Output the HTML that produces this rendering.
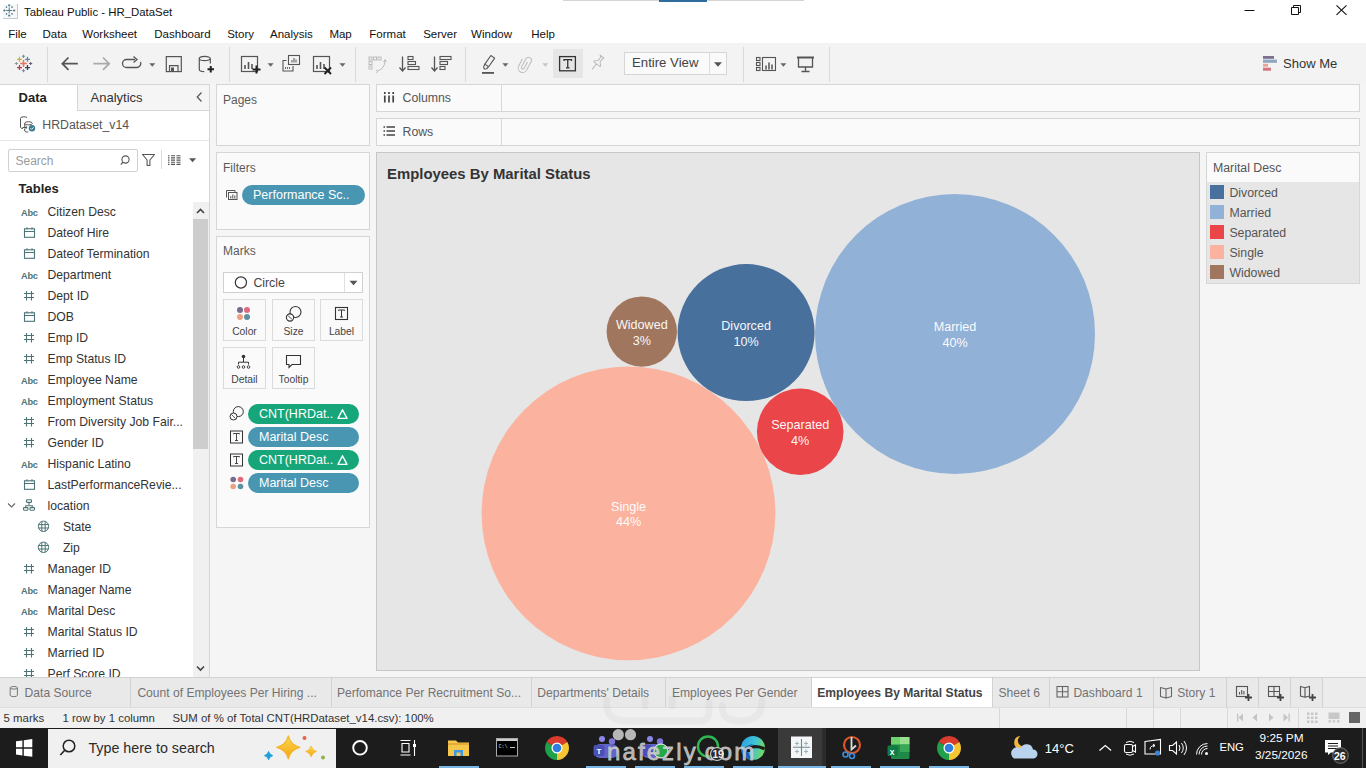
<!DOCTYPE html>
<html><head><meta charset="utf-8">
<style>
*{margin:0;padding:0;box-sizing:border-box}
html,body{width:1366px;height:768px;overflow:hidden;background:#f5f5f5;font-family:"Liberation Sans",sans-serif;color:#333}
.a{position:absolute}
.t{position:absolute;white-space:nowrap;line-height:1}
svg{position:absolute;overflow:visible}
</style></head><body>

<div class="a" style="left:0px;top:0px;width:1366px;height:44px;background:#fff;"></div>
<div class="a" style="left:563px;top:0px;width:96px;height:1px;background:#d4d4d4;"></div>
<div class="a" style="left:659px;top:0px;width:48px;height:2px;background:#2d6c9c;"></div>
<div class="a" style="left:707px;top:0px;width:97px;height:1px;background:#d4d4d4;"></div>
<svg style="left:3px;top:4px;" width="16" height="16" viewBox="0 0 16 16"><rect x="0" y="0" width="15" height="15" fill="#f6f8f9"/><path d="M14.5 0v14.5H0" fill="none" stroke="#c3c8cc" stroke-width="1"/><g stroke="#557a88" stroke-width="1"><path d="M6.2 3.5v6M3.2 6.5h6"/><path d="M6.2 0.3v2.2M5.1 1.4h2.2M6.2 10.5v2.2M5.1 11.6h2.2M0.3 6.5h2.2M1.4 5.4v2.2M10 6.5h2.2M11.1 5.4v2.2"/><path d="M2.8 3.1h1.4M3.5 2.4v1.4M8.3 3.1h1.4M9 2.4v1.4M2.8 9.9h1.4M3.5 9.2v1.4M8.3 9.9h1.4M9 9.2v1.4"/></g></svg>
<div class="t" style="left:24.0px;top:7.25px;font-size:11.4px;color:#111;font-weight:400;">Tableau Public - HR_DataSet</div>
<div class="t" style="left:8.2px;top:29.16px;font-size:11.5px;color:#111;font-weight:400;">File</div>
<div class="t" style="left:42.5px;top:29.16px;font-size:11.5px;color:#111;font-weight:400;">Data</div>
<div class="t" style="left:82.3px;top:29.16px;font-size:11.5px;color:#111;font-weight:400;">Worksheet</div>
<div class="t" style="left:154.3px;top:29.16px;font-size:11.5px;color:#111;font-weight:400;">Dashboard</div>
<div class="t" style="left:227.2px;top:29.16px;font-size:11.5px;color:#111;font-weight:400;">Story</div>
<div class="t" style="left:270.0px;top:29.16px;font-size:11.5px;color:#111;font-weight:400;">Analysis</div>
<div class="t" style="left:329.4px;top:29.16px;font-size:11.5px;color:#111;font-weight:400;">Map</div>
<div class="t" style="left:369.3px;top:29.16px;font-size:11.5px;color:#111;font-weight:400;">Format</div>
<div class="t" style="left:423.2px;top:29.16px;font-size:11.5px;color:#111;font-weight:400;">Server</div>
<div class="t" style="left:471.1px;top:29.16px;font-size:11.5px;color:#111;font-weight:400;">Window</div>
<div class="t" style="left:531.2px;top:29.16px;font-size:11.5px;color:#111;font-weight:400;">Help</div>
<svg style="left:1244px;top:5px;" width="12" height="12" viewBox="0 0 12 12"><path d="M0.5 5.5h10" stroke="#111" stroke-width="1"/></svg>
<svg style="left:1289px;top:4px;" width="12" height="12" viewBox="0 0 12 12"><path d="M2.5 3.5h7v7h-7z M4.5 3.5v-2h7v7h-2" fill="none" stroke="#111" stroke-width="1"/></svg>
<svg style="left:1335.5px;top:5px;" width="11" height="11" viewBox="0 0 11 11"><path d="M0.5 0.3l10 9.6M10.5 0.3l-10 9.6" stroke="#111" stroke-width="1.1"/></svg>
<div class="a" style="left:0px;top:43px;width:1366px;height:41px;background:#f3f3f3;"></div>
<div class="a" style="left:47px;top:47px;width:1px;height:35px;background:#dadada;"></div>
<div class="a" style="left:229px;top:47px;width:1px;height:35px;background:#dadada;"></div>
<div class="a" style="left:355px;top:47px;width:1px;height:35px;background:#dadada;"></div>
<div class="a" style="left:465px;top:47px;width:1px;height:35px;background:#dadada;"></div>
<div class="a" style="left:743px;top:47px;width:1px;height:35px;background:#dadada;"></div>
<div class="a" style="left:829px;top:47px;width:1px;height:35px;background:#dadada;"></div>
<svg style="left:0px;top:0px;" width="1" height="1" viewBox="0 0 1 1"><path d="M20.1 63.5h6.8M23.5 60.1v6.8" stroke="#e2775c" stroke-width="1.6"/><path d="M17.0 59.3h5.0M19.5 56.8v5.0" stroke="#cfae45" stroke-width="1.3"/><path d="M25.0 59.3h5.0M27.5 56.8v5.0" stroke="#5b8d9c" stroke-width="1.3"/><path d="M17.0 67.6h5.0M19.5 65.1v5.0" stroke="#b73a52" stroke-width="1.3"/><path d="M25.0 67.6h5.0M27.5 65.1v5.0" stroke="#2b4559" stroke-width="1.3"/><path d="M21.9 56.3h3.2M23.5 54.699999999999996v3.2" stroke="#5d9aa3" stroke-width="1.1"/><path d="M21.9 70.7h3.2M23.5 69.10000000000001v3.2" stroke="#7d89aa" stroke-width="1.1"/><path d="M14.799999999999999 63.5h3.2M16.4 61.9v3.2" stroke="#8b9b98" stroke-width="1.1"/><path d="M29.0 63.5h3.2M30.6 61.9v3.2" stroke="#6c5c7e" stroke-width="1.1"/></svg>
<svg style="left:0px;top:0px;" width="1" height="1" viewBox="0 0 1 1"><path d="M77.8 63.7H62.5M68.5 57.5l-6.2 6.2 6.2 6.2" fill="none" stroke="#555" stroke-width="1.7"/><path d="M93.4 63.7h15.5M103 57.5l6.2 6.2-6.2 6.2" fill="none" stroke="#aaa" stroke-width="1.7"/></svg>
<svg style="left:0px;top:0px;" width="1" height="1" viewBox="0 0 1 1"><path d="M135 59.5h-8.5a4 4 0 0 0 0 8h10.5a4 4 0 0 0 3.5-5.5" fill="none" stroke="#555" stroke-width="1.3"/><path d="M133.5 56.5l3.5 3-3.5 3" fill="none" stroke="#555" stroke-width="1.3"/><path d="M149.3 63.25h6l-3.0 3.5z" fill="#666"/></svg>
<svg style="left:0px;top:0px;" width="1" height="1" viewBox="0 0 1 1"><rect x="166.3" y="56.6" width="15" height="15" fill="none" stroke="#555" stroke-width="1.2"/><path d="M169.5 71.2v-5.5h8.5v5.5" fill="none" stroke="#555" stroke-width="1.2"/><rect x="171" y="67.5" width="3" height="4" fill="#555"/></svg>
<svg style="left:0px;top:0px;" width="1" height="1" viewBox="0 0 1 1"><path d="M199.3 58.5v11a5.5 2.2 0 0 0 5 2.2M199.3 58.5a5.5 2.2 0 0 1 11 0v5" fill="none" stroke="#555" stroke-width="1.2"/><path d="M199.3 58.5a5.5 2.2 0 0 0 11 0" fill="none" stroke="#555" stroke-width="1.2"/><path d="M207.5 69.3h6.5M210.75 66v6.6" stroke="#222" stroke-width="2"/></svg>
<svg style="left:0px;top:0px;" width="1" height="1" viewBox="0 0 1 1"><rect x="241.5" y="56.5" width="16" height="15" fill="none" stroke="#555" stroke-width="1.2"/><path d="M245 69v-4M248.5 69v-7M252 69v-5" stroke="#555" stroke-width="1.6"/><path d="M252.5 69.5h8M256.5 65.5v8" stroke="#222" stroke-width="2"/><path d="M267.6 63.25h6l-3.0 3.5z" fill="#666"/></svg>
<svg style="left:0px;top:0px;" width="1" height="1" viewBox="0 0 1 1"><rect x="288.5" y="55.5" width="11" height="9" fill="#f3f3f3" stroke="#555" stroke-width="1.1"/><path d="M292 62.5v-2.5M294 62.5v-4.5M296 62.5v-3" stroke="#555" stroke-width="1"/><path d="M286.5 60.5h-3.5v10.5h10v-5" fill="none" stroke="#555" stroke-width="1.1"/><path d="M285.5 69v-2M287.5 69v-2M289.5 69v-2" stroke="#555" stroke-width="0.9"/></svg>
<svg style="left:0px;top:0px;" width="1" height="1" viewBox="0 0 1 1"><rect x="313.5" y="56.5" width="16" height="15" fill="none" stroke="#555" stroke-width="1.2"/><path d="M317 69v-4M320.5 69v-7M324 69v-5" stroke="#555" stroke-width="1.6"/><path d="M324.5 67.5l6.5 6.5M331 67.5l-6.5 6.5" stroke="#222" stroke-width="2"/><path d="M339.5 63.25h6l-3.0 3.5z" fill="#666"/></svg>
<svg style="left:0px;top:0px;" width="1" height="1" viewBox="0 0 1 1"><g fill="none" stroke="#bbb" stroke-width="1"><rect x="369" y="57" width="3" height="3"/><rect x="373.5" y="57" width="3" height="3"/><rect x="378" y="57" width="3" height="3"/><rect x="369" y="61.5" width="3" height="3"/><rect x="369" y="66" width="3" height="3"/><path d="M385 60.5q0 8-7.5 10.5M383.5 62l1.5-2.5 1.5 2.5M376 70l1.5 1.2-1 1.8"/></g></svg>
<svg style="left:0px;top:0px;" width="1" height="1" viewBox="0 0 1 1"><path d="M402.5 56.5v14M399.5 67.5l3 3.5 3-3.5" fill="none" stroke="#555" stroke-width="1.3"/><g fill="none" stroke="#555" stroke-width="1.1"><rect x="408" y="56.5" width="5" height="3"/><rect x="408" y="61.5" width="7.5" height="3"/><rect x="408" y="66.5" width="11" height="3"/></g></svg>
<svg style="left:0px;top:0px;" width="1" height="1" viewBox="0 0 1 1"><path d="M434.5 56.5v14M431.5 67.5l3 3.5 3-3.5" fill="none" stroke="#555" stroke-width="1.3"/><g fill="none" stroke="#555" stroke-width="1.1"><rect x="440" y="56.5" width="11" height="3"/><rect x="440" y="61.5" width="7.5" height="3"/><rect x="440" y="66.5" width="5" height="3"/></g></svg>
<svg style="left:0px;top:0px;" width="1" height="1" viewBox="0 0 1 1"><g transform="translate(488.3 63.2) rotate(35)" fill="none" stroke="#555" stroke-width="1.1" stroke-linejoin="round"><path d="M-2.3 -7.8h4.6v10.5h-4.6z M-2.3 2.7l0.5 2.8l1.6 1.5h0.4l1.6-1.5l0.5-2.8"/></g><rect x="482" y="72" width="12" height="1.8" fill="#555"/><path d="M502.4 63.25h6l-3.0 3.5z" fill="#666"/></svg>
<svg style="left:0px;top:0px;" width="1" height="1" viewBox="0 0 1 1"><g transform="translate(525 63.6) rotate(28)" fill="none" stroke="#bbb" stroke-width="1"><path d="M1.5 -2.5V4.5a1.5 1.5 0 0 1-3 0V-4.5a3 3 0 0 1 6 0V5a4.5 4.5 0 0 1-9 0V-3"/></g><path d="M542.3 63.25h6l-3.0 3.5z" fill="#c4c4c4"/></svg>
<div class="a" style="left:553px;top:49px;width:30px;height:29px;background:#e6e6e6;"></div>
<svg style="left:0px;top:0px;" width="1" height="1" viewBox="0 0 1 1"><rect x="559.6" y="56.6" width="15.8" height="14.2" fill="none" stroke="#333" stroke-width="1.3"/><path d="M564 61v-1.3h7.5v1.3M567.75 59.7v8.2M566 67.9h3.5" fill="none" stroke="#333" stroke-width="1.3"/></svg>
<svg style="left:0px;top:0px;" width="1" height="1" viewBox="0 0 1 1"><g transform="translate(597.5 62.5) rotate(38)" fill="none" stroke="#bbb" stroke-width="1" stroke-linejoin="round"><path d="M-2.5 -7.5h5l-0.8 1.5v4l2.8 2.5v1.2h-8v-1.2l2.8-2.5v-4z M0 1.7v7"/></g></svg>
<div class="a" style="left:624px;top:52px;width:103px;height:23px;background:#fafafa;border:1px solid #d6d6d6;"></div>
<div class="a" style="left:709px;top:53px;width:1px;height:21px;background:#dcdcdc;"></div>
<div class="t" style="left:632.0px;top:56.42px;font-size:13.2px;color:#444;font-weight:400;">Entire View</div>
<svg style="left:0px;top:0px;" width="1" height="1" viewBox="0 0 1 1"><path d="M714.0 62.25h8l-4.0 4.5z" fill="#555"/></svg>
<svg style="left:0px;top:0px;" width="1" height="1" viewBox="0 0 1 1"><g fill="none" stroke="#555" stroke-width="1.1"><rect x="756.5" y="57.5" width="3.5" height="3"/><rect x="756.5" y="62.5" width="3.5" height="3"/><rect x="756.5" y="67.5" width="3.5" height="3"/><rect x="762.5" y="57.5" width="13" height="13"/></g><path d="M766 69.5v-4M769 69.5v-7M772 69.5v-5" stroke="#555" stroke-width="1.5"/><path d="M780.4 63.25h6l-3.0 3.5z" fill="#666"/></svg>
<svg style="left:0px;top:0px;" width="1" height="1" viewBox="0 0 1 1"><path d="M797 57.5h17" stroke="#555" stroke-width="2"/><path d="M798.5 58v9h14v-9M805.5 67v4.5M801.5 71.5h8" fill="none" stroke="#555" stroke-width="1.3"/></svg>
<svg style="left:0px;top:0px;" width="1" height="1" viewBox="0 0 1 1"><rect x="1263" y="56" width="11" height="2.8" fill="#7b7090"/><rect x="1263" y="59.6" width="14" height="3.2" fill="#8ea6bf"/><rect x="1263" y="63.8" width="5" height="2.9" fill="#eaa48f"/><rect x="1263" y="67.7" width="8" height="3" fill="#d7737d"/></svg>
<div class="t" style="left:1283.0px;top:56.99px;font-size:13px;color:#333;font-weight:400;">Show Me</div>
<div class="a" style="left:0px;top:84px;width:210px;height:593px;background:#fff;border:1px solid #d6d6d6;border-left:none;border-bottom:none"></div>
<div class="a" style="left:77px;top:84px;width:133px;height:27px;background:#f5f5f5;border:1px solid #d6d6d6;border-right:1px solid #d6d6d6"></div>
<div class="a" style="left:0px;top:110px;width:77px;height:1px;background:#fff;"></div>
<div class="t" style="left:18.6px;top:90.89px;font-size:13px;color:#222;font-weight:700;">Data</div>
<div class="t" style="left:90.6px;top:90.89px;font-size:13px;color:#333;font-weight:400;">Analytics</div>
<svg style="left:0px;top:0px;" width="1" height="1" viewBox="0 0 1 1"><path d="M201.5 92.5l-4.3 4.5 4.3 4.5" fill="none" stroke="#555" stroke-width="1.2"/></svg>
<svg style="left:0px;top:0px;" width="1" height="1" viewBox="0 0 1 1"><path d="M27 117.5a3.5 1.5 0 0 0-6.5 0.8v9a3 1.5 0 0 0 2.5 1.3" fill="none" stroke="#555" stroke-width="1"/><ellipse cx="28.5" cy="123.3" rx="3.8" ry="1.6" fill="none" stroke="#555" stroke-width="1"/><path d="M24.7 123.3v3.5M22.5 127.5h4.5M25.5 126l1.6 1.5-1.6 1.5M24.7 128.5v2.5a3 1.3 0 0 0 3.5 1" fill="none" stroke="#555" stroke-width="1"/><circle cx="32" cy="128.2" r="3.2" fill="#3d7a96"/><path d="M30.5 128.2l1.1 1.1 2-2" fill="none" stroke="#fff" stroke-width="0.9"/></svg>
<div class="t" style="left:42.3px;top:119.19px;font-size:12.3px;color:#555;font-weight:400;">HRDataset_v14</div>
<div class="a" style="left:0px;top:140px;width:209px;height:1px;background:#e6e6e6;"></div>
<div class="a" style="left:8px;top:149px;width:130px;height:23px;background:#fff;border:1px solid #d0d0d0;border-radius:2px"></div>
<div class="t" style="left:15.5px;top:154.84px;font-size:12px;color:#9c9c9c;font-weight:400;">Search</div>
<svg style="left:0px;top:0px;" width="1" height="1" viewBox="0 0 1 1"><circle cx="125.5" cy="159.5" r="3.6" fill="none" stroke="#555" stroke-width="1.1"/><path d="M123 162.2l-2.2 2.4" stroke="#555" stroke-width="1.2"/><path d="M142.5 154.5h12l-4.6 5.5v5.5h-2.8v-5.5z" fill="none" stroke="#555" stroke-width="1.1" stroke-linejoin="round"/><path d="M161.5 150v19" stroke="#dcdcdc" stroke-width="1"/><g stroke="#555" stroke-width="1.1"><path d="M168 155.7h1.5M171 155.7h4M176.5 155.7h4M168 157.9h1.5M171 157.9h4M176.5 157.9h4M168 160.1h1.5M171 160.1h4M176.5 160.1h4M168 162.3h1.5M171 162.3h4M176.5 162.3h4M168 164.4h1.5M171 164.4h4M176.5 164.4h4"/></g><path d="M189.1 158.2h7l-3.5 4z" fill="#555"/></svg>
<div class="t" style="left:18.6px;top:182.39px;font-size:13px;color:#222;font-weight:700;">Tables</div>
<div class="a" style="left:193px;top:202px;width:16px;height:475px;background:#f0f0f0;"></div>
<div class="a" style="left:193px;top:219px;width:15px;height:230px;background:#cdcdcd;"></div>
<svg style="left:0px;top:0px;" width="1" height="1" viewBox="0 0 1 1"><path d="M197 213l3.5-3.5 3.5 3.5" fill="none" stroke="#444" stroke-width="1.6"/><path d="M197 666.5l3.5 3.5 3.5-3.5" fill="none" stroke="#444" stroke-width="1.6"/></svg>
<div class="t" style="left:47.5px;top:205.77px;font-size:12.2px;color:#333;font-weight:400;">Citizen Desc</div>
<div class="t" style="left:47.5px;top:226.77px;font-size:12.2px;color:#333;font-weight:400;">Dateof Hire</div>
<div class="t" style="left:47.5px;top:247.77px;font-size:12.2px;color:#333;font-weight:400;">Dateof Termination</div>
<div class="t" style="left:47.5px;top:268.77px;font-size:12.2px;color:#333;font-weight:400;">Department</div>
<div class="t" style="left:47.5px;top:289.77px;font-size:12.2px;color:#333;font-weight:400;">Dept ID</div>
<div class="t" style="left:47.5px;top:310.77px;font-size:12.2px;color:#333;font-weight:400;">DOB</div>
<div class="t" style="left:47.5px;top:331.77px;font-size:12.2px;color:#333;font-weight:400;">Emp ID</div>
<div class="t" style="left:47.5px;top:352.77px;font-size:12.2px;color:#333;font-weight:400;">Emp Status ID</div>
<div class="t" style="left:47.5px;top:373.77px;font-size:12.2px;color:#333;font-weight:400;">Employee Name</div>
<div class="t" style="left:47.5px;top:394.77px;font-size:12.2px;color:#333;font-weight:400;">Employment Status</div>
<div class="t" style="left:47.5px;top:415.77px;font-size:12.2px;color:#333;font-weight:400;">From Diversity Job Fair...</div>
<div class="t" style="left:47.5px;top:436.77px;font-size:12.2px;color:#333;font-weight:400;">Gender ID</div>
<div class="t" style="left:47.5px;top:457.77px;font-size:12.2px;color:#333;font-weight:400;">Hispanic Latino</div>
<div class="t" style="left:47.5px;top:478.77px;font-size:12.2px;color:#333;font-weight:400;">LastPerformanceRevie...</div>
<div class="t" style="left:47.5px;top:499.77px;font-size:12.2px;color:#333;font-weight:400;">location</div>
<div class="t" style="left:62.9px;top:520.77px;font-size:12.2px;color:#333;font-weight:400;">State</div>
<div class="t" style="left:62.9px;top:541.77px;font-size:12.2px;color:#333;font-weight:400;">Zip</div>
<div class="t" style="left:47.5px;top:562.77px;font-size:12.2px;color:#333;font-weight:400;">Manager ID</div>
<div class="t" style="left:47.5px;top:583.77px;font-size:12.2px;color:#333;font-weight:400;">Manager Name</div>
<div class="t" style="left:47.5px;top:604.77px;font-size:12.2px;color:#333;font-weight:400;">Marital Desc</div>
<div class="t" style="left:47.5px;top:625.77px;font-size:12.2px;color:#333;font-weight:400;">Marital Status ID</div>
<div class="t" style="left:47.5px;top:646.77px;font-size:12.2px;color:#333;font-weight:400;">Married ID</div>
<div class="a" style="left:0;top:660px;width:192px;height:17px;overflow:hidden"><div class="t" style="left:47.5px;top:7.77px;font-size:12.2px;color:#333">Perf Score ID</div></div>
<div class="a" style="left:0;top:660px;width:192px;height:17px;overflow:hidden"><svg style="left:0;top:-660px" width="1" height="1"><path d="M26.5 669v9.5M31.5 669v9.5M24 671.5h10M24 675.5h10" stroke="#4d7476" stroke-width="1.1"/></svg></div>
<svg style="left:0px;top:0px;" width="1" height="1" viewBox="0 0 1 1"><text x="21" y="215.60000000000002" font-family="Liberation Sans" font-weight="700" font-size="9.2" fill="#4d7476" letter-spacing="-0.2">Abc</text><rect x="24.5" y="228.8" width="10" height="8.5" fill="none" stroke="#4d7476" stroke-width="1.1"/><path d="M24.5 231.5h10M27 227.3v2M32 227.3v2" stroke="#4d7476" stroke-width="1.1"/><rect x="24.5" y="249.8" width="10" height="8.5" fill="none" stroke="#4d7476" stroke-width="1.1"/><path d="M24.5 252.5h10M27 248.3v2M32 248.3v2" stroke="#4d7476" stroke-width="1.1"/><text x="21" y="278.6" font-family="Liberation Sans" font-weight="700" font-size="9.2" fill="#4d7476" letter-spacing="-0.2">Abc</text><path d="M26.5 291v9.5M31.5 291v9.5M24 293.5h10M24 297.5h10" stroke="#4d7476" stroke-width="1.1"/><rect x="24.5" y="312.8" width="10" height="8.5" fill="none" stroke="#4d7476" stroke-width="1.1"/><path d="M24.5 315.5h10M27 311.3v2M32 311.3v2" stroke="#4d7476" stroke-width="1.1"/><path d="M26.5 333v9.5M31.5 333v9.5M24 335.5h10M24 339.5h10" stroke="#4d7476" stroke-width="1.1"/><path d="M26.5 354v9.5M31.5 354v9.5M24 356.5h10M24 360.5h10" stroke="#4d7476" stroke-width="1.1"/><text x="21" y="383.6" font-family="Liberation Sans" font-weight="700" font-size="9.2" fill="#4d7476" letter-spacing="-0.2">Abc</text><text x="21" y="404.6" font-family="Liberation Sans" font-weight="700" font-size="9.2" fill="#4d7476" letter-spacing="-0.2">Abc</text><path d="M26.5 417v9.5M31.5 417v9.5M24 419.5h10M24 423.5h10" stroke="#4d7476" stroke-width="1.1"/><path d="M26.5 438v9.5M31.5 438v9.5M24 440.5h10M24 444.5h10" stroke="#4d7476" stroke-width="1.1"/><text x="21" y="467.6" font-family="Liberation Sans" font-weight="700" font-size="9.2" fill="#4d7476" letter-spacing="-0.2">Abc</text><rect x="24.5" y="480.8" width="10" height="8.5" fill="none" stroke="#4d7476" stroke-width="1.1"/><path d="M24.5 483.5h10M27 479.3v2M32 479.3v2" stroke="#4d7476" stroke-width="1.1"/><g fill="none" stroke="#4d7476" stroke-width="1.1"><rect x="26.5" y="499.8" width="5" height="2.6" rx="0.6"/><rect x="23.5" y="507.6" width="4.5" height="2.6" rx="0.6"/><rect x="30" y="507.6" width="4.5" height="2.6" rx="0.6"/><path d="M29 502.40000000000003v2.5M25.7 507.6v-1.9h6.6v1.9"/></g><path d="M8 503.5l3.5 3.5 3.5-3.5" fill="none" stroke="#666" stroke-width="1.1"/><g fill="none" stroke="#4d7476" stroke-width="1"><circle cx="43.5" cy="526.3" r="5.2"/><path d="M38.5 524.5999999999999h10M38.5 528.0h10M41.8 521.3v10M45.2 521.3v10"/></g><g fill="none" stroke="#4d7476" stroke-width="1"><circle cx="43.5" cy="547.3" r="5.2"/><path d="M38.5 545.5999999999999h10M38.5 549.0h10M41.8 542.3v10M45.2 542.3v10"/></g><path d="M26.5 564v9.5M31.5 564v9.5M24 566.5h10M24 570.5h10" stroke="#4d7476" stroke-width="1.1"/><text x="21" y="593.5999999999999" font-family="Liberation Sans" font-weight="700" font-size="9.2" fill="#4d7476" letter-spacing="-0.2">Abc</text><text x="21" y="614.5999999999999" font-family="Liberation Sans" font-weight="700" font-size="9.2" fill="#4d7476" letter-spacing="-0.2">Abc</text><path d="M26.5 627v9.5M31.5 627v9.5M24 629.5h10M24 633.5h10" stroke="#4d7476" stroke-width="1.1"/><path d="M26.5 648v9.5M31.5 648v9.5M24 650.5h10M24 654.5h10" stroke="#4d7476" stroke-width="1.1"/></svg>
<div class="a" style="left:216px;top:84px;width:154px;height:62px;background:#fafafa;border:1px solid #d6d6d6;"></div>
<div class="t" style="left:223.0px;top:94.34px;font-size:12px;color:#5a5a5a;font-weight:400;">Pages</div>
<div class="a" style="left:216px;top:152px;width:154px;height:78px;background:#fafafa;border:1px solid #d6d6d6;"></div>
<div class="t" style="left:223.0px;top:161.84px;font-size:12px;color:#5a5a5a;font-weight:400;">Filters</div>
<svg style="left:0px;top:0px;" width="1" height="1" viewBox="0 0 1 1"><g fill="none" stroke="#555" stroke-width="1"><path d="M226.5 197.5v-7h8.5v1.5"/><rect x="228.5" y="192.5" width="8.5" height="7"/></g><path d="M230.8 198.5v-2.5M232.8 198.5v-4M234.8 198.5v-3" stroke="#555" stroke-width="1"/></svg>
<div class="a" style="left:242px;top:185px;width:123px;height:20px;background:#4996b2;border-radius:10.0px"></div>
<div class="t" style="left:253.0px;top:188.82px;font-size:12.5px;color:#fff;font-weight:400;">Performance Sc..</div>
<div class="a" style="left:216px;top:236px;width:154px;height:292px;background:#fafafa;border:1px solid #d6d6d6;"></div>
<div class="t" style="left:223.0px;top:245.34px;font-size:12px;color:#5a5a5a;font-weight:400;">Marks</div>
<div class="a" style="left:223px;top:272px;width:140px;height:21px;background:#fff;border:1px solid #d0d0d0;"></div>
<div class="a" style="left:344px;top:273px;width:1px;height:19px;background:#e0e0e0;"></div>
<svg style="left:0px;top:0px;" width="1" height="1" viewBox="0 0 1 1"><circle cx="240.9" cy="282.5" r="5.6" fill="none" stroke="#333" stroke-width="1.2"/><path d="M349.5 280.75h8l-4.0 4.5z" fill="#555"/></svg>
<div class="t" style="left:253.4px;top:276.59px;font-size:12.3px;color:#444;font-weight:400;">Circle</div>
<div class="a" style="left:223px;top:299px;width:43px;height:42px;background:#fafafa;border:1px solid #dadada;"></div>
<svg style="left:0px;top:0px;" width="1" height="1" viewBox="0 0 1 1"><circle cx="240" cy="310" r="3" fill="#7a6a8e"/><circle cx="247" cy="310" r="3" fill="#e06a7c"/><circle cx="240" cy="317" r="3" fill="#eba17f"/><circle cx="247" cy="317" r="3" fill="#5d8fa0"/></svg>
<div class="t" style="left:223px;width:43px;text-align:center;top:327.28px;font-size:10.3px;color:#444">Color</div>
<div class="a" style="left:272px;top:299px;width:43px;height:42px;background:#fafafa;border:1px solid #dadada;"></div>
<svg style="left:0px;top:0px;" width="1" height="1" viewBox="0 0 1 1"><circle cx="295.5" cy="312" r="5.5" fill="none" stroke="#333" stroke-width="1.1"/><circle cx="290" cy="317.5" r="3.6" fill="#fafafa" stroke="#333" stroke-width="1.1"/><path d="M288 315.5l4 4" stroke="#333" stroke-width="0.9"/></svg>
<div class="t" style="left:272px;width:43px;text-align:center;top:327.28px;font-size:10.3px;color:#444">Size</div>
<div class="a" style="left:320px;top:299px;width:43px;height:42px;background:#fafafa;border:1px solid #dadada;"></div>
<svg style="left:0px;top:0px;" width="1" height="1" viewBox="0 0 1 1"><rect x="335.5" y="307.5" width="12" height="12" fill="none" stroke="#333" stroke-width="1.1"/><path d="M338.5 310.8v-0.8h6v0.8M341.5 310v7M340 317h3" fill="none" stroke="#333" stroke-width="1"/></svg>
<div class="t" style="left:320px;width:43px;text-align:center;top:327.28px;font-size:10.3px;color:#444">Label</div>
<div class="a" style="left:223px;top:347px;width:43px;height:42px;background:#fafafa;border:1px solid #dadada;"></div>
<svg style="left:0px;top:0px;" width="1" height="1" viewBox="0 0 1 1"><circle cx="243.5" cy="356.5" r="1.8" fill="#333"/><path d="M243.5 358v4M238.5 364.5v-2.3h10v2.3" fill="none" stroke="#333" stroke-width="1"/><circle cx="238.5" cy="367" r="1.3" fill="none" stroke="#333" stroke-width="0.9"/><circle cx="243.5" cy="367" r="1.3" fill="none" stroke="#333" stroke-width="0.9"/><circle cx="248.5" cy="367" r="1.3" fill="none" stroke="#333" stroke-width="0.9"/></svg>
<div class="t" style="left:223px;width:43px;text-align:center;top:375.28px;font-size:10.3px;color:#444">Detail</div>
<div class="a" style="left:272px;top:347px;width:43px;height:42px;background:#fafafa;border:1px solid #dadada;"></div>
<svg style="left:0px;top:0px;" width="1" height="1" viewBox="0 0 1 1"><path d="M286.5 355.5h14v9h-8.5l-3 3v-3h-2.5z" fill="none" stroke="#333" stroke-width="1.1"/></svg>
<div class="t" style="left:272px;width:43px;text-align:center;top:375.28px;font-size:10.3px;color:#444">Tooltip</div>
<svg style="left:0px;top:0px;" width="1" height="1" viewBox="0 0 1 1"><circle cx="238.3" cy="411.6" r="5" fill="none" stroke="#333" stroke-width="1"/><circle cx="233.5" cy="416.5" r="3.5" fill="#fafafa" stroke="#333" stroke-width="1"/><path d="M231.6 414.6l3.8 3.8" stroke="#333" stroke-width="0.8"/><rect x="230.5" y="431" width="12" height="12" fill="none" stroke="#333" stroke-width="1"/><path d="M233.5 434.3v-0.8h6v0.8M236.5 433.5v7M235 440.5h3" fill="none" stroke="#333" stroke-width="0.9"/><rect x="230.5" y="454" width="12" height="12" fill="none" stroke="#333" stroke-width="1"/><path d="M233.5 457.3v-0.8h6v0.8M236.5 456.5v7M235 463.5h3" fill="none" stroke="#333" stroke-width="0.9"/><circle cx="233.2" cy="479.5" r="2.8" fill="#7a6a8e"/><circle cx="240.5" cy="479.5" r="2.8" fill="#e06a7c"/><circle cx="233.2" cy="486.5" r="2.8" fill="#eba17f"/><circle cx="240.5" cy="486.5" r="2.8" fill="#5d8fa0"/></svg>
<div class="a" style="left:248px;top:404px;width:111px;height:20px;background:#16a679;border-radius:10.0px"></div>
<div class="t" style="left:259.0px;top:407.82px;font-size:12.5px;color:#fff;font-weight:400;">CNT(HRDat..</div>
<svg style="left:0px;top:0px;" width="1" height="1" viewBox="0 0 1 1"><path d="M338 418.4l4.5-8.7 4.5 8.7z" fill="none" stroke="#fff" stroke-width="1.4" stroke-linejoin="round"/></svg>
<div class="a" style="left:248px;top:427px;width:111px;height:20px;background:#4996b2;border-radius:10.0px"></div>
<div class="t" style="left:259.0px;top:430.82px;font-size:12.5px;color:#fff;font-weight:400;">Marital Desc</div>
<div class="a" style="left:248px;top:450px;width:111px;height:20px;background:#16a679;border-radius:10.0px"></div>
<div class="t" style="left:259.0px;top:453.82px;font-size:12.5px;color:#fff;font-weight:400;">CNT(HRDat..</div>
<svg style="left:0px;top:0px;" width="1" height="1" viewBox="0 0 1 1"><path d="M338 464.4l4.5-8.7 4.5 8.7z" fill="none" stroke="#fff" stroke-width="1.4" stroke-linejoin="round"/></svg>
<div class="a" style="left:248px;top:473px;width:111px;height:20px;background:#4996b2;border-radius:10.0px"></div>
<div class="t" style="left:259.0px;top:476.82px;font-size:12.5px;color:#fff;font-weight:400;">Marital Desc</div>
<div class="a" style="left:376px;top:84px;width:984px;height:28px;background:#fafafa;border:1px solid #d6d6d6;"></div>
<div class="a" style="left:501px;top:85px;width:1px;height:26px;background:#d9d9d9;"></div>
<svg style="left:0px;top:0px;" width="1" height="1" viewBox="0 0 1 1"><path d="M384.8 92v2M389 92v2M393.2 92v2M384.8 95.5v7M389 95.5v7M393.2 95.5v7" stroke="#444" stroke-width="1.7"/></svg>
<div class="t" style="left:402.5px;top:92.29px;font-size:12.3px;color:#555;font-weight:400;">Columns</div>
<div class="a" style="left:376px;top:118px;width:984px;height:28px;background:#fafafa;border:1px solid #d6d6d6;"></div>
<div class="a" style="left:501px;top:119px;width:1px;height:26px;background:#d9d9d9;"></div>
<svg style="left:0px;top:0px;" width="1" height="1" viewBox="0 0 1 1"><path d="M383.5 127h1.5M383.5 131h1.5M383.5 135h1.5M386.5 127h8.5M386.5 131h8.5M386.5 135h8.5" stroke="#444" stroke-width="1.6"/></svg>
<div class="t" style="left:402.5px;top:125.89px;font-size:12.3px;color:#555;font-weight:400;">Rows</div>
<div class="a" style="left:376px;top:152px;width:824px;height:519px;background:#e6e6e6;border:1px solid #c6c6c6;"></div>
<div class="t" style="left:387.0px;top:167.18px;font-size:14.9px;color:#333;font-weight:700;">Employees By Marital Status</div>
<svg style="left:0px;top:0px;" width="1" height="1" viewBox="0 0 1 1"><circle cx="628.5" cy="513.3" r="146.9" fill="#fbb39f"/><circle cx="955" cy="334" r="140" fill="#92b1d7"/><circle cx="746.1" cy="332.6" r="68.5" fill="#48709c"/><circle cx="800.2" cy="431.7" r="43.3" fill="#ea4548"/><circle cx="641.8" cy="331.6" r="35.2" fill="#a0765f"/></svg>
<div class="t" style="left:578.5px;width:100px;text-align:center;top:500.63px;font-size:12.6px;color:#fff;opacity:0.95">Single</div>
<div class="t" style="left:578.5px;width:100px;text-align:center;top:516.43px;font-size:12.6px;color:#fff;opacity:0.95">44%</div>
<div class="t" style="left:905px;width:100px;text-align:center;top:321.33px;font-size:12.6px;color:#fff;opacity:0.95">Married</div>
<div class="t" style="left:905px;width:100px;text-align:center;top:337.13px;font-size:12.6px;color:#fff;opacity:0.95">40%</div>
<div class="t" style="left:696.1px;width:100px;text-align:center;top:319.93px;font-size:12.6px;color:#fff;opacity:0.95">Divorced</div>
<div class="t" style="left:696.1px;width:100px;text-align:center;top:335.73px;font-size:12.6px;color:#fff;opacity:0.95">10%</div>
<div class="t" style="left:750.2px;width:100px;text-align:center;top:419.03px;font-size:12.6px;color:#fff;opacity:0.95">Separated</div>
<div class="t" style="left:750.2px;width:100px;text-align:center;top:434.83px;font-size:12.6px;color:#fff;opacity:0.95">4%</div>
<div class="t" style="left:591.8px;width:100px;text-align:center;top:318.93px;font-size:12.6px;color:#fff;opacity:0.95">Widowed</div>
<div class="t" style="left:591.8px;width:100px;text-align:center;top:334.73px;font-size:12.6px;color:#fff;opacity:0.95">3%</div>
<div class="a" style="left:1206px;top:152px;width:154px;height:132px;background:#e6e6e6;border:1px solid #d6d6d6;"></div>
<div class="a" style="left:1207px;top:153px;width:152px;height:29px;background:#fafafa;"></div>
<div class="t" style="left:1213.0px;top:162.09px;font-size:12.3px;color:#555;font-weight:400;">Marital Desc</div>
<div class="a" style="left:1210px;top:185px;width:14px;height:14px;background:#48709c;"></div>
<div class="t" style="left:1229.4px;top:186.89px;font-size:12.3px;color:#555;font-weight:400;">Divorced</div>
<div class="a" style="left:1210px;top:205px;width:14px;height:14px;background:#92b1d7;"></div>
<div class="t" style="left:1229.4px;top:206.89px;font-size:12.3px;color:#555;font-weight:400;">Married</div>
<div class="a" style="left:1210px;top:225px;width:14px;height:14px;background:#ea4548;"></div>
<div class="t" style="left:1229.4px;top:226.89px;font-size:12.3px;color:#555;font-weight:400;">Separated</div>
<div class="a" style="left:1210px;top:245px;width:14px;height:14px;background:#fbb39f;"></div>
<div class="t" style="left:1229.4px;top:246.89px;font-size:12.3px;color:#555;font-weight:400;">Single</div>
<div class="a" style="left:1210px;top:265px;width:14px;height:14px;background:#a0765f;"></div>
<div class="t" style="left:1229.4px;top:266.89px;font-size:12.3px;color:#555;font-weight:400;">Widowed</div>
<div class="a" style="left:0px;top:677px;width:1366px;height:30px;background:#ececec;border:1px solid #d2d2d2;border-left:none;border-right:none;border-bottom:none"></div>
<div class="a" style="left:0px;top:678px;width:131px;height:29px;background:#e9e9e9;border:1px solid #d2d2d2;border-top:none;border-left:none;border-bottom:none"></div>
<div class="t" style="left:24.6px;top:686.85px;font-size:12.1px;color:#737373;font-weight:400;">Data Source</div>
<div class="a" style="left:131px;top:678px;width:201px;height:29px;background:#e9e9e9;border:1px solid #d2d2d2;border-top:none;border-left:none;border-bottom:none"></div>
<div class="t" style="left:137.4px;top:686.85px;font-size:12.1px;color:#737373;font-weight:400;">Count of Employees Per Hiring ...</div>
<div class="a" style="left:332px;top:678px;width:200px;height:29px;background:#e9e9e9;border:1px solid #d2d2d2;border-top:none;border-left:none;border-bottom:none"></div>
<div class="t" style="left:336.9px;top:686.85px;font-size:12.1px;color:#737373;font-weight:400;">Perfomance Per Recruitment So...</div>
<div class="a" style="left:532px;top:678px;width:134px;height:29px;background:#e9e9e9;border:1px solid #d2d2d2;border-top:none;border-left:none;border-bottom:none"></div>
<div class="t" style="left:537.3px;top:686.85px;font-size:12.1px;color:#737373;font-weight:400;">Departments&#39; Details</div>
<div class="a" style="left:666px;top:678px;width:146px;height:29px;background:#e9e9e9;border:1px solid #d2d2d2;border-top:none;border-left:none;border-bottom:none"></div>
<div class="t" style="left:671.9px;top:686.85px;font-size:12.1px;color:#737373;font-weight:400;">Employees Per Gender</div>
<div class="a" style="left:812px;top:678px;width:181px;height:29px;background:#ffffff;border:1px solid #d2d2d2;border-top:none;border-left:none;border-bottom:none"></div>
<div class="t" style="left:817.2px;top:686.85px;font-size:12.1px;color:#444;font-weight:700;">Employees By Marital Status</div>
<div class="a" style="left:993px;top:678px;width:57px;height:29px;background:#e9e9e9;border:1px solid #d2d2d2;border-top:none;border-left:none;border-bottom:none"></div>
<div class="t" style="left:998.4px;top:686.85px;font-size:12.1px;color:#737373;font-weight:400;">Sheet 6</div>
<div class="a" style="left:1050px;top:678px;width:104px;height:29px;background:#e9e9e9;border:1px solid #d2d2d2;border-top:none;border-left:none;border-bottom:none"></div>
<div class="t" style="left:1073.4px;top:686.85px;font-size:12.1px;color:#737373;font-weight:400;">Dashboard 1</div>
<div class="a" style="left:1154px;top:678px;width:73px;height:29px;background:#e9e9e9;border:1px solid #d2d2d2;border-top:none;border-left:none;border-bottom:none"></div>
<div class="t" style="left:1177.2px;top:686.85px;font-size:12.1px;color:#737373;font-weight:400;">Story 1</div>
<div class="a" style="left:1227px;top:678px;width:32px;height:29px;background:#e9e9e9;border:1px solid #d2d2d2;border-top:none;border-left:none;border-bottom:none"></div>
<div class="a" style="left:1259px;top:678px;width:32px;height:29px;background:#e9e9e9;border:1px solid #d2d2d2;border-top:none;border-left:none;border-bottom:none"></div>
<div class="a" style="left:1291px;top:678px;width:32px;height:29px;background:#e9e9e9;border:1px solid #d2d2d2;border-top:none;border-left:none;border-bottom:none"></div>
<svg style="left:0px;top:0px;" width="1" height="1" viewBox="0 0 1 1"><path d="M10.2 687.8a3.6 1.3 0 0 1 7.2 0v7.5a3.6 1.3 0 0 1-7.2 0z M10.2 687.8a3.6 1.3 0 0 0 7.2 0" fill="none" stroke="#777" stroke-width="1"/><rect x="1057" y="686.5" width="11" height="10.5" fill="none" stroke="#666" stroke-width="1.1"/><path d="M1062.5 686.5v10.5M1057 691.7h11" stroke="#666" stroke-width="1.1"/><path d="M1160.5 687.5l5.5 1.5 5.5-1.5v9l-5.5 1.5-5.5-1.5z M1166 689v9" fill="none" stroke="#666" stroke-width="1.1" stroke-linejoin="round"/><rect x="1236.5" y="686.5" width="11" height="10" fill="none" stroke="#555" stroke-width="1.1"/><path d="M1239.5 694.5v-2.5M1241.7 694.5v-4.5M1243.9 694.5v-3.5" stroke="#555" stroke-width="1.1"/><path d="M1245 697.5h7M1248.5 694v7" stroke="#444" stroke-width="1.8"/><rect x="1268.5" y="686.5" width="11" height="10" fill="none" stroke="#555" stroke-width="1.1"/><path d="M1274 686.5v10M1268.5 691.5h11" stroke="#555" stroke-width="1.1"/><path d="M1277 697.5h7M1280.5 694v7" stroke="#444" stroke-width="1.8"/><path d="M1300.5 686.5l4.5 1.2 4.5-1.2v9.5l-4.5 1.2-4.5-1.2z M1305 687.7v9.5" fill="none" stroke="#555" stroke-width="1.1"/><path d="M1309 697.5h7M1312.5 694v7" stroke="#444" stroke-width="1.8"/></svg>
<div class="a" style="left:0px;top:707px;width:1366px;height:21px;background:#f0f0f0;border:1px solid #dedede;border-left:none;border-right:none;border-bottom:none"></div>
<div class="t" style="left:3.6px;top:712.95px;font-size:11.4px;color:#333;font-weight:400;">5 marks</div>
<div class="t" style="left:62.5px;top:712.95px;font-size:11.4px;color:#333;font-weight:400;">1 row by 1 column</div>
<div class="t" style="left:172.5px;top:712.95px;font-size:11.4px;color:#333;font-weight:400;">SUM of % of Total CNT(HRDataset_v14.csv): 100%</div>
<div class="a" style="left:999px;top:708px;width:1px;height:20px;background:#d8d8d8;"></div>
<div class="a" style="left:1126px;top:708px;width:1px;height:20px;background:#d8d8d8;"></div>
<div class="a" style="left:1153px;top:708px;width:1px;height:20px;background:#d8d8d8;"></div>
<div class="a" style="left:1180px;top:708px;width:1px;height:20px;background:#d8d8d8;"></div>
<div class="a" style="left:1227px;top:708px;width:1px;height:20px;background:#d8d8d8;"></div>
<div class="a" style="left:1298px;top:708px;width:1px;height:20px;background:#d8d8d8;"></div>
<svg style="left:0px;top:0px;" width="1" height="1" viewBox="0 0 1 1"><g fill="#c4c4c4"><rect x="1237" y="713.5" width="1.3" height="8"/><path d="M1243 713.5v8l-4.5-4z"/><path d="M1257 713.5v8l-4.5-4z"/><path d="M1269 713.5v8l4.5-4z"/><path d="M1283.5 713.5v8l4.5-4z"/><rect x="1288.5" y="713.5" width="1.3" height="8"/></g><g fill="#c8c8c8"><rect x="1307" y="712.5" width="2.5" height="2.5"/><rect x="1311" y="712.5" width="2.5" height="2.5"/><rect x="1315" y="712.5" width="2.5" height="2.5"/><rect x="1307" y="716.5" width="2.5" height="2.5"/><rect x="1311" y="716.5" width="2.5" height="2.5"/><rect x="1315" y="716.5" width="2.5" height="2.5"/><rect x="1307" y="720.5" width="2.5" height="2.5"/><rect x="1311" y="720.5" width="2.5" height="2.5"/><rect x="1315" y="720.5" width="2.5" height="2.5"/><rect x="1328.5" y="712.5" width="11" height="6.5"/><rect x="1328.5" y="720.2" width="2.5" height="2.3"/><rect x="1332.7" y="720.2" width="2.5" height="2.3"/><rect x="1337" y="720.2" width="2.5" height="2.3"/></g><rect x="1349" y="712" width="11" height="11" fill="#666"/></svg>
<svg style="left:0px;top:0px;" width="1" height="1" viewBox="0 0 1 1"><g fill="none" stroke="rgba(0,0,0,0.03)" stroke-width="7" stroke-linecap="round" stroke-linejoin="round"><path d="M607 700q-3 21 20 21h72q10 0 10-10v-8M722 706q0 15 18 15q22 0 22-20M645 700v6M672 699v7"/></g></svg>
<div class="a" style="left:0px;top:728px;width:1366px;height:40px;background:#1c1c1c;"></div>
<div class="a" style="left:48px;top:729px;width:288px;height:39px;background:#f0f0f0;"></div>
<div class="a" style="left:778px;top:728px;width:44px;height:40px;background:#3a3a3a;"></div>
<div class="a" style="left:822px;top:728px;width:4px;height:40px;background:#2c2c2c;"></div>
<svg style="left:0px;top:0px;" width="1" height="1" viewBox="0 0 1 1"><path d="M16 741.3l6.4-0.9v6.8h-6.4z M23.8 740.2l8.5-1.1v8.1h-8.5z M16 748.7h6.4v6.8l-6.4-0.9z M23.8 748.7h8.5v8.1l-8.5-1.1z" fill="#fff"/><circle cx="69" cy="746" r="5.8" fill="none" stroke="#222" stroke-width="1.5"/><path d="M64.8 750.2l-4.5 4.8" stroke="#222" stroke-width="1.6"/></svg>
<div class="t" style="left:88.4px;top:741.39px;font-size:14.3px;color:#2b2b2b;font-weight:400;">Type here to search</div>
<svg style="left:0px;top:0px;" width="1" height="1" viewBox="0 0 1 1"><defs><linearGradient id="sg" x1="0" y1="0" x2="0" y2="1"><stop offset="0" stop-color="#fdd84a"/><stop offset="1" stop-color="#f2a516"/></linearGradient></defs><path d="M288.3 735.90Q290.60 745.10 299.80 747.4Q290.60 749.70 288.3 758.90Q286.00 749.70 276.80 747.4Q286.00 745.10 288.3 735.90z" fill="url(#sg)" stroke="#f4b526" stroke-width="1.2" stroke-linejoin="round"/><path d="M311.1 746.00Q312.18 750.32 316.50 751.4Q312.18 752.48 311.1 756.80Q310.02 752.48 305.70 751.4Q310.02 750.32 311.1 746.00z" fill="url(#sg)" stroke="#f4b526" stroke-width="0.8" stroke-linejoin="round"/><path d="M268.6 751.40Q269.52 754.68 272.80 755.6Q269.52 756.52 268.6 759.80Q267.68 756.52 264.40 755.6Q267.68 754.68 268.6 751.40z" fill="#1f9fd9" stroke="#1f9fd9" stroke-width="0.8" stroke-linejoin="round"/><circle cx="304.5" cy="738" r="2" fill="#e0674a"/><circle cx="323" cy="757.5" r="2" fill="#8fb34a"/><circle cx="360" cy="747.8" r="6.8" fill="none" stroke="#fff" stroke-width="1.9"/><path d="M400.5 740.5h10M400.5 755h10M402 743.5h7v8.5h-7z M414.5 740v16" fill="none" stroke="#fff" stroke-width="1.1"/><rect x="413" y="744" width="3" height="3" fill="#fff"/><path d="M448 740.5h8l2 2h11v13.5h-21z" fill="#f5c84c"/><path d="M448 743h21v2h-21z" fill="#e7a93a"/><path d="M454 756v-6h9v6h-2.5v-3.5h-4v3.5z" fill="#3d9ae0"/><rect x="496.5" y="738.5" width="21" height="17.5" fill="#000" stroke="#aaa" stroke-width="1"/><rect x="497" y="739" width="20" height="2" fill="#ccc"/><text x="498.5" y="748" font-family="Liberation Mono" font-size="5" fill="#ddd">C:\</text><path d="M510 747.5h5" stroke="#ddd" stroke-width="0.9"/></svg>
<svg style="left:0px;top:0px;" width="1" height="1" viewBox="0 0 1 1"><path d="M557 748L546.61 742.00A12 12 0 0 1 567.39 742.00z" fill="#db3b2d"/><path d="M557 748L567.39 742.00A12 12 0 0 1 557.00 760.00z" fill="#f6c532"/><path d="M557 748L557.00 760.00A12 12 0 0 1 546.61 742.00z" fill="#1fa04a"/><circle cx="557" cy="748" r="5.5200000000000005" fill="#fff"/><circle cx="557" cy="748" r="4.32" fill="#2f7de0"/><path d="M949 748L938.61 742.00A12 12 0 0 1 959.39 742.00z" fill="#db3b2d"/><path d="M949 748L959.39 742.00A12 12 0 0 1 949.00 760.00z" fill="#f6c532"/><path d="M949 748L949.00 760.00A12 12 0 0 1 938.61 742.00z" fill="#1fa04a"/><circle cx="949" cy="748" r="5.5200000000000005" fill="#fff"/><circle cx="949" cy="748" r="4.32" fill="#2f7de0"/></svg>
<svg style="left:0px;top:0px;" width="1" height="1" viewBox="0 0 1 1"><circle cx="602" cy="739" r="3" fill="#8b86e8"/><circle cx="612" cy="741.5" r="3.2" fill="#7b77db"/><rect x="594" y="744" width="24" height="14" rx="6" fill="#6264c7"/><rect x="593.5" y="745" width="11" height="11" rx="2" fill="#4b4fb5"/><text x="596.5" y="754" font-family="Liberation Sans" font-weight="700" font-size="8" fill="#fff">T</text><circle cx="650" cy="739" r="3" fill="#8b86e8"/><circle cx="660" cy="741.5" r="3.2" fill="#7b77db"/><rect x="642" y="744" width="24" height="14" rx="6" fill="#6264c7"/><rect x="641.5" y="745" width="11" height="11" rx="2" fill="#4b4fb5"/><circle cx="661" cy="751" r="7" fill="#27a745" stroke="#fff" stroke-width="1"/><circle cx="708" cy="746.5" r="10" fill="none" stroke="#2fb552" stroke-width="2.4"/><defs><linearGradient id="eg" x1="0" y1="0" x2="1" y2="0.3"><stop offset="0" stop-color="#2d9fe0"/><stop offset="0.6" stop-color="#3ec3d8"/><stop offset="1" stop-color="#6fd66a"/></linearGradient></defs><circle cx="753" cy="748" r="12" fill="url(#eg)"/><path d="M741.5 751q3 9 13 9q-7-4-6-11q1-4 6-5q-8 0-13 7z" fill="#1560b8"/><path d="M748.5 752q0-5 6-5.5q6 0 10 2.5" fill="none" stroke="#1c1c1c" stroke-width="3.2"/></svg>
<div class="t" style="left:607px;top:740.3px;font-size:24px;font-weight:400;color:rgba(205,205,205,0.85);letter-spacing:2.1px;-webkit-text-stroke:0.8px rgba(205,205,205,0.85)">nafezly.com</div>
<svg style="left:0px;top:0px;" width="1" height="1" viewBox="0 0 1 1"><circle cx="618.3" cy="734.7" r="5.6" fill="rgba(200,200,200,0.9)"/><circle cx="630.5" cy="734.7" r="5.6" fill="rgba(200,200,200,0.9)"/><circle cx="717" cy="754" r="6.5" fill="#2a2a2a" stroke="#ccc" stroke-width="1.2"/><text x="712.5" y="758" font-family="Liberation Sans" font-weight="700" font-size="10" fill="#eee">19</text></svg>
<svg style="left:0px;top:0px;" width="1" height="1" viewBox="0 0 1 1"><rect x="791" y="736.5" width="21" height="21.5" fill="#f4f6f7"/><g stroke="#6a8a96" stroke-width="1.1"><path d="M801.5 739v17M793 747.2h17"/><path d="M797 741.5v4M795 743.5h4M806 741.5v4M804 743.5h4M797 749.5v4M795 751.5h4M806 749.5v4M804 751.5h4" stroke="#9bb4bb"/></g></svg>
<svg style="left:0px;top:0px;" width="1" height="1" viewBox="0 0 1 1"><circle cx="852" cy="745" r="8" fill="none" stroke="#d9562b" stroke-width="2.2"/><path d="M851.5 737v12.5l4.5-4" fill="none" stroke="#ddd" stroke-width="1.8"/><circle cx="845.5" cy="754.5" r="2.5" fill="none" stroke="#3b8ed8" stroke-width="1.6"/><circle cx="852" cy="756" r="2.5" fill="none" stroke="#3b8ed8" stroke-width="1.6"/></svg>
<svg style="left:0px;top:0px;" width="1" height="1" viewBox="0 0 1 1"><rect x="891" y="737" width="18.5" height="22" rx="1.5" fill="#1f8a47"/><rect x="891" y="737" width="9" height="7.5" fill="#6fd46d"/><rect x="900" y="737" width="9.5" height="7.5" fill="#99e08e"/><rect x="900" y="744.5" width="9.5" height="7.5" fill="#3aa957"/><rect x="887.5" y="745.5" width="10.5" height="10.5" rx="1.5" fill="#107c41"/><text x="889.8" y="754.5" font-family="Liberation Sans" font-weight="700" font-size="8.5" fill="#fff">x</text></svg>
<div class="a" style="left:439px;top:766px;width:40px;height:2px;background:#78b6e6;"></div>
<div class="a" style="left:586px;top:766px;width:40px;height:2px;background:#78b6e6;"></div>
<div class="a" style="left:635px;top:766px;width:40px;height:2px;background:#78b6e6;"></div>
<div class="a" style="left:684px;top:766px;width:40px;height:2px;background:#78b6e6;"></div>
<div class="a" style="left:733px;top:766px;width:40px;height:2px;background:#78b6e6;"></div>
<div class="a" style="left:778px;top:766px;width:48px;height:2px;background:#78b6e6;"></div>
<div class="a" style="left:831px;top:766px;width:40px;height:2px;background:#78b6e6;"></div>
<div class="a" style="left:880px;top:766px;width:40px;height:2px;background:#78b6e6;"></div>
<div class="a" style="left:929px;top:766px;width:40px;height:2px;background:#78b6e6;"></div>
<svg style="left:0px;top:0px;" width="1" height="1" viewBox="0 0 1 1"><path d="M1020.5 736a6.5 6.5 0 1 0 6 9.5a5.2 5.2 0 0 1-6-9.5z" fill="#f1b83a"/><path d="M1014 758.5h19a4.5 4.5 0 0 0 0-9a6.5 6.5 0 0 0-12.3-1.5a5 5 0 0 0-6.7 10.5z" fill="#b9d2ee"/><path d="M1099.5 750.5l5.8-5 5.8 5" fill="none" stroke="#fff" stroke-width="1.2"/><path d="M1126 742.5q4-2.5 8 0M1126 754q4 2.5 8 0" fill="none" stroke="#fff" stroke-width="1"/><rect x="1124.5" y="744.5" width="8" height="8" rx="1.5" fill="none" stroke="#fff" stroke-width="1.1"/><path d="M1132.5 746.5l3-1.5v7l-3-1.5" fill="none" stroke="#fff" stroke-width="1.1"/><path d="M1145 741.5l15.5-2v14.5h-15.5z" fill="none" stroke="#fff" stroke-width="1.1"/><path d="M1150 749.5q0-4 5-4M1153 744l2 1.5-2 1.5" fill="none" stroke="#fff" stroke-width="1"/><circle cx="1157.5" cy="753" r="2.6" fill="#3a86d6"/><path d="M1169.5 745.5h3l4-3.5v12l-4-3.5h-3z" fill="none" stroke="#fff" stroke-width="1.1"/><path d="M1179 745q2 3 0 6M1181.5 743q3.5 5 0 10M1184 741q5 7 0 14" fill="none" stroke="#fff" stroke-width="1"/><path d="M1196.5 754.5a11 11 0 0 1 11-11M1199 754.5a8.5 8.5 0 0 1 8.5-8.5M1201.5 754.5a6 6 0 0 1 6-6" fill="none" stroke="#fff" stroke-width="1"/><circle cx="1206.5" cy="753.5" r="1.5" fill="#fff"/></svg>
<div class="t" style="left:1044.8px;top:741.99px;font-size:13px;color:#fff;font-weight:400;">14°C</div>
<div class="t" style="left:1219.4px;top:742.23px;font-size:11.3px;color:#fff;font-weight:400;">ENG</div>
<div class="t" style="left:1259.6px;top:732.81px;font-size:11.8px;color:#fff;font-weight:400;">9:25 PM</div>
<div class="t" style="left:1255.0px;top:750.21px;font-size:11.8px;color:#fff;font-weight:400;">3/25/2026</div>
<svg style="left:0px;top:0px;" width="1" height="1" viewBox="0 0 1 1"><path d="M1325 740h16v12.5h-10l-3 2.5v-2.5h-3z" fill="#fff"/><path d="M1328 743.5h10M1328 746h10M1328 748.5h10" stroke="#1c1c1c" stroke-width="1"/><circle cx="1340.5" cy="755.5" r="7.8" fill="#2b2b2b" stroke="#777" stroke-width="1"/></svg>
<div class="t" style="left:1334.0px;top:750.71px;font-size:10.5px;color:#fff;font-weight:700;">26</div>
<div class="a" style="left:1362px;top:728px;width:1px;height:40px;background:#555;"></div>
</body></html>
